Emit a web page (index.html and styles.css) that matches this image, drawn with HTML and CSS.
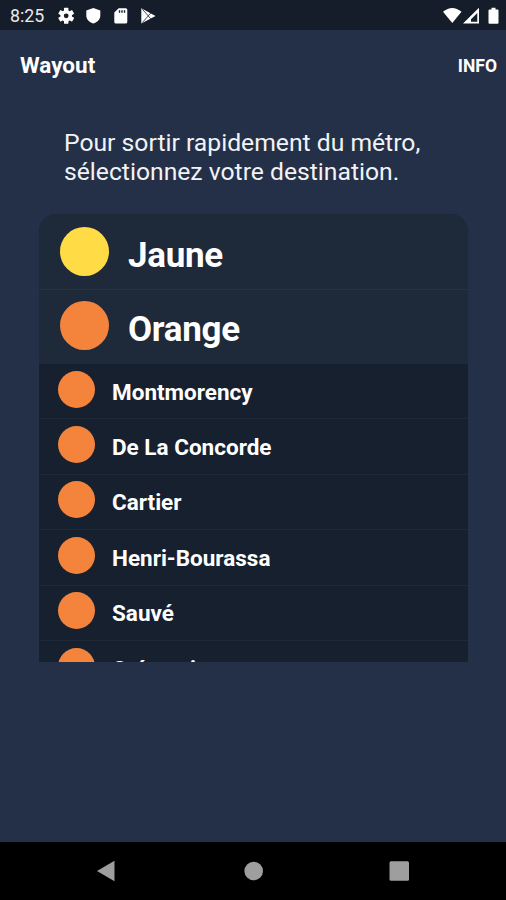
FILE: index.html
```html
<!DOCTYPE html>
<html lang="fr">
<head>
<meta charset="utf-8">
<title>Wayout</title>
<link rel="stylesheet" href="styles.css">
</head>
<body>
<div class="screen">
  <div class="status">
    <span class="clock">8:25</span>
    <svg class="status-icons" width="101" height="20" viewBox="0 0 101 20" fill="#fff">
      <g transform="translate(11.2 9.800)">
        <circle r="4.1" fill="none" stroke="#fff" stroke-width="3.400"/>
        <g id="teeth">
          <rect x="-2.200" y="-8" width="4.400" height="4" rx=".6"/>
          <rect x="-2.200" y="4" width="4.400" height="4" rx=".6"/>
        </g>
        <use href="#teeth" transform="rotate(60)"/>
        <use href="#teeth" transform="rotate(120)"/>
      </g>
      <path d="M38.3 2l7 2.600v4.900c0 3.800-3 7-7 8-4-1-7-4.200-7-8V4.600z"/>
      <path fill-rule="evenodd" d="M63.700 2.200h7q1.600 0 1.600 1.600v12.200q0 1.600-1.600 1.600h-9.800q-1.600 0-1.600-1.600V6.500zM63.800 4.300v2.500h1.400V4.300zM66.300 4.300v2.500h1.400V4.300zM68.800 4.300v2.500h1.400V4.300z"/>
      <path d="M86.300 2.300L100.500 9.900 86.300 17.500z"/>
      <path d="M87.300 3.200l8.500 9.600M87.300 16.600l8.500-9.600" fill="none" stroke="#172030" stroke-width=".8"/>
    </svg>
    <svg class="signal-icons" width="58" height="20" viewBox="0 0 58 20" fill="#fff">
      <path d="M1 5.800Q10.300-2 19.500 5.800L10.300 17z"/>
      <path fill-rule="evenodd" d="M37 1.800v15.700H21zM35.300 7l-6.300 6.200v2.600H35.300z"/>
      <path d="M47.500 3.500h2V1.800h4v1.700h2q1 0 1 1v12.200q0 1-1 1h-8q-1 0-1-1V4.500q0-1 1-1z"/>
    </svg>
  </div>
  <header class="appbar">
    <h1 class="title">Wayout</h1>
    <span class="info">INFO</span>
  </header>
  <main class="content">
    <p class="intro">Pour sortir rapidement du métro,<br>sélectionnez votre destination.</p>
    <div class="list">
      <div class="line"><i class="dot yellow"></i><span class="line-name">Jaune</span></div>
      <div class="line"><i class="dot"></i><span class="line-name">Orange</span></div>
      <div class="station"><i class="dot"></i><span class="station-name">Montmorency</span></div>
      <div class="station"><i class="dot"></i><span class="station-name">De La Concorde</span></div>
      <div class="station"><i class="dot"></i><span class="station-name">Cartier</span></div>
      <div class="station"><i class="dot"></i><span class="station-name">Henri-Bourassa</span></div>
      <div class="station"><i class="dot"></i><span class="station-name">Sauvé</span></div>
      <div class="station"><i class="dot"></i><span class="station-name">Crémazie</span></div>
    </div>
  </main>
  <nav class="navbar">
    <svg width="506" height="58" viewBox="0 0 506 58" fill="#9e9e9e">
      <path d="M97 29L114.500 18.700V39.300z"/>
      <circle cx="253.700" cy="29" r="9.300"/>
      <rect x="389.500" y="19.300" width="19.500" height="19.500" rx="1.500"/>
    </svg>
  </nav>
</div>
</body>
</html>
```
FILE: styles.css
```css
* { box-sizing: border-box; }
body { margin: 0; font-family: Roboto, "Liberation Sans", sans-serif; color: #fff; }
.screen { width: 506px; height: 900px; display: flex; flex-direction: column; background: #243047; overflow: hidden; }
.status { height: 30px; flex: none; display: flex; align-items: center; padding: 1px 6px 0 10px; background: #151d2b; }
.clock { width: 45px; font-size: 17.8px; color: #e8eaed; }
.status-icons { display: block; }
.signal-icons { display: block; margin-left: auto; }
.appbar { height: 70px; flex: none; display: flex; align-items: center; justify-content: space-between; padding: 1px 9px 0 20px; }
.title { margin: 0; padding-bottom: 2px; font-size: 22.500px; font-weight: 700; }
.info { font-size: 17.500px; font-weight: 700; }
.content { flex: 1; padding: 28px 38px 0 39px; }
.intro { margin: 0 0 28px 25px; font-size: 24.700px; line-height: 29px; color: #f2f3f5; white-space: nowrap; }
.list { height: 448px; overflow: hidden; border-radius: 18px 18px 0 0; background: #17202f; }
.line { height: 75px; display: flex; align-items: center; padding: 0 0 0 21px; background: #1e2939; }
.line + .line { padding-bottom: 3px; border-top: 1px solid #263244; }
.dot { flex: none; width: 37px; height: 37px; border-radius: 50%; background: #f4833b; }
.line .dot { width: 49px; height: 49px; margin-right: 19px; }
.line .yellow { background: #ffdc45; }
.line-name { font-size: 35px; font-weight: 700; letter-spacing: -0.3px; padding-top: 8px; }
.station { height: 55.400px; display: flex; align-items: center; padding: 0 0 4px 19px; border-bottom: 1px solid #1e2938; }
.station .dot { margin-right: 17px; }
.station-name { font-size: 22.500px; font-weight: 700; padding-top: 5px; }
.navbar { height: 58px; flex: none; background: #000; }
.navbar svg { display: block; }
```
